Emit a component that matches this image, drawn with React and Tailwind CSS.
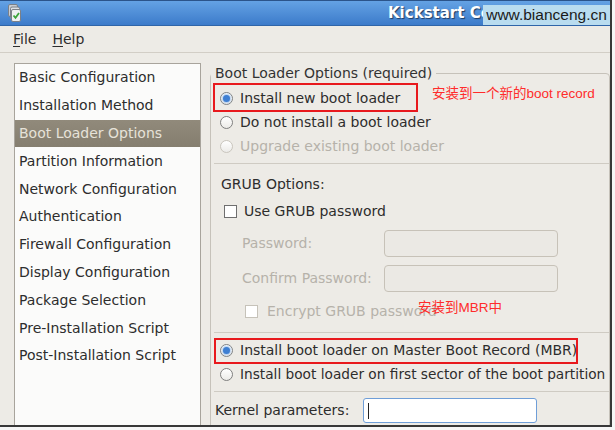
function Radio({ checked, disabled }) {
  return (
    <span
      className={`relative flex h-[13px] w-[13px] shrink-0 items-center justify-center rounded-full border bg-gradient-to-b from-white to-[#ecebe8] ${
        disabled ? "border-[#c9c5bd]" : "border-[#7f7f7f]"
      }`}
    >
      {checked && (
        <span className="h-[7px] w-[7px] rounded-full bg-[#3f7fd2] shadow-[0_0_2px_1px_#a9c9ef]" />
      )}
    </span>
  );
}

function Check({ disabled }) {
  return (
    <span
      className={`h-[13px] w-[13px] shrink-0 border bg-white ${
        disabled ? "border-[#c6c2b9] bg-[#f1efeb]" : "border-[#6f6f6f]"
      }`}
    />
  );
}

const sections = [
  "Basic Configuration",
  "Installation Method",
  "Boot Loader Options",
  "Partition Information",
  "Network Configuration",
  "Authentication",
  "Firewall Configuration",
  "Display Configuration",
  "Package Selection",
  "Pre-Installation Script",
  "Post-Installation Script",
];

export default function App() {
  return (
    <div className="h-[430px] w-[615px] bg-[#f6f6f6] font-['DejaVu_Sans',sans-serif] text-[14px] text-[#2d2d2d]">
      <div className="relative h-[427px] w-[612px] overflow-hidden border-r-2 border-b-2 border-[#383838] bg-[#edebe6]">
        {/* title bar */}
        <div className="flex h-[26px] items-center border-t border-b border-t-[#2b548a] border-b-[#2f65a8] bg-gradient-to-b from-[#64a2e4] to-[#3c7bca]">
          <svg className="ml-[8px]" width="13" height="18" viewBox="0 0 13 18">
            <rect x="0.5" y="0.5" width="9" height="12" rx="1.5" fill="#c9cdd2" stroke="#7b8088" />
            <rect x="2.5" y="3" width="9" height="12" rx="1.5" fill="#dde0e4" stroke="#7b8088" />
            <rect x="3.5" y="5.5" width="9" height="12" rx="1.5" fill="#eef0f2" stroke="#7b8088" />
            <path d="M5.5 11.5 L7.5 13.8 L11 9" fill="none" stroke="#3aa53a" strokeWidth="1.8" />
          </svg>
          <span className="ml-[367px] text-[15px] font-bold text-white [text-shadow:1px_1px_1px_#1f3b63]">
            Kickstart Configurator
          </span>
        </div>
        <div className="absolute left-[483px] top-[5px] flex h-[20px] w-[127px] items-center justify-center bg-[#b9dcef] font-['Liberation_Sans',sans-serif] text-[15.5px] text-[#1b1b1b]">
          www.bianceng.cn
        </div>

        {/* menu bar */}
        <div className="flex h-[27px] items-center gap-[16px] border-b border-[#d2cec6] pl-[13px] pt-[1px]">
          <span>
            <span className="underline underline-offset-2">F</span>ile
          </span>
          <span>
            <span className="underline underline-offset-2">H</span>elp
          </span>
        </div>

        {/* body */}
        <div className="flex items-start">
          <div className="ml-[14px] mt-[10px] h-[400px] w-[187px] shrink-0 border border-[#a8a49c] bg-[#fbfbfa]">
            {sections.map((s, i) => (
              <div
                key={s}
                className={`flex h-[27.8px] items-center pl-[4px] ${
                  i === 2 ? "bg-gradient-to-b from-[#918a7b] to-[#857e6f] text-[#e6e2d9]" : ""
                }`}
              >
                {s}
              </div>
            ))}
          </div>

          <fieldset className="ml-[9px] mt-[10px] h-[420px] flex-1 rounded-[4px] border border-[#c6c2ba]">
            <legend className="px-[4px] leading-[20px] text-[#333]">Boot Loader Options (required)</legend>

            <div className="mt-[3px] flex h-[24px] items-center gap-[7px] pl-[9px]">
              <Radio checked />
              <span>Install new boot loader</span>
            </div>
            <div className="flex h-[24px] items-center gap-[7px] pl-[9px]">
              <Radio />
              <span>Do not install a boot loader</span>
            </div>
            <div className="flex h-[24px] items-center gap-[7px] pl-[9px] text-[#b6b2aa]">
              <Radio disabled />
              <span>Upgrade existing boot loader</span>
            </div>

            <div className="ml-[3px] mt-[5px] h-px bg-[#cfcbc3]" />

            <div className="mt-[8px] flex h-[24px] items-center pl-[10px]">GRUB Options:</div>
            <div className="mt-[3px] flex h-[24px] items-center gap-[7px] pl-[13px]">
              <Check />
              <span>Use GRUB password</span>
            </div>
            <div className="mt-[7px] flex h-[27px] items-center pl-[31px] text-[#b6b2aa]">
              <span className="w-[142px]">Password:</span>
              <span className="h-[27px] w-[174px] rounded-[4px] border border-[#c7c2b8] bg-[#ebe9e4]" />
            </div>
            <div className="mt-[8px] flex h-[27px] items-center pl-[31px] text-[#b6b2aa]">
              <span className="w-[142px]">Confirm Password:</span>
              <span className="h-[27px] w-[174px] rounded-[4px] border border-[#c7c2b8] bg-[#ebe9e4]" />
            </div>
            <div className="mt-[7px] flex h-[24px] items-center gap-[9px] pl-[34px] text-[#b6b2aa]">
              <Check disabled />
              <span>Encrypt GRUB password</span>
            </div>

            <div className="ml-[3px] mt-[9px] h-px bg-[#cfcbc3]" />

            <div className="mt-[5px] flex h-[24px] items-center gap-[7px] pl-[9px]">
              <Radio checked />
              <span>Install boot loader on Master Boot Record (MBR)</span>
            </div>
            <div className="flex h-[24px] items-center gap-[7px] whitespace-nowrap pl-[9px]">
              <Radio />
              <span className="text-[13.7px]">Install boot loader on first sector of the boot partition</span>
            </div>

            <div className="ml-[3px] mt-[5px] h-px bg-[#cfcbc3]" />

            <div className="mt-[6px] flex h-[25px] items-center pl-[4px]">
              <span className="w-[148px]">Kernel parameters:</span>
              <span className="flex h-[25px] w-[174px] items-center rounded-[3px] border-[1.5px] border-[#6f9ed8] bg-white pl-[4px]">
                <span className="h-[16px] w-px bg-[#222]" />
              </span>
            </div>
          </fieldset>
        </div>

        {/* red annotations */}
        <div className="absolute left-[213px] top-[83px] h-[29px] w-[205px] border-2 border-[#e8191d]" />
        <div className="absolute left-[432px] top-[84px] font-['Liberation_Sans','Noto_Sans_CJK_SC',sans-serif] text-[13.5px] text-[#ff2b2b]">
          安装到一个新的boot record
        </div>
        <div className="absolute left-[214px] top-[338px] h-[26px] w-[364px] border-2 border-[#e8191d]" />
        <div className="absolute left-[418px] top-[298px] font-['Liberation_Sans','Noto_Sans_CJK_SC',sans-serif] text-[13.5px] text-[#ff2b2b]">
          安装到MBR中
        </div>
      </div>
    </div>
  );
}
